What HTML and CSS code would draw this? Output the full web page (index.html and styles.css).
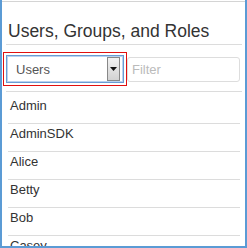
FILE: index.html
```html
<!DOCTYPE html>
<html>
<head>
<meta charset="utf-8">
<link rel="stylesheet" href="styles.css">
</head>
<body>
<div class="window">
  <div class="panel">
    <h1 class="title">Users, Groups, and Roles</h1>
    <div class="rule"></div>
    <div class="toolbar">
      <div class="select">
        <span class="select-text">Users</span>
        <span class="select-btn"><svg width="7" height="4" viewBox="0 0 7 4"><path d="M0 0h7L3.5 4z" fill="#111"/></svg></span>
      </div>
      <div class="filter">Filter</div>
      <div class="highlight"></div>
    </div>
    <div class="rule"></div>
    <ul class="list">
      <li class="item">Admin</li>
      <li class="item">AdminSDK</li>
      <li class="item">Alice</li>
      <li class="item">Betty</li>
      <li class="item">Bob</li>
      <li class="item">Casey</li>
    </ul>
  </div>
</div>
</body>
</html>
```

FILE: styles.css
```css
html, body {
  margin: 0;
  padding: 0;
  background: #fff;
}
.window {
  width: 247px;
  height: 248px;
  box-sizing: border-box;
  border-left: 2px solid #5b9bd5;
  border-right: 2px solid #5b9bd5;
  border-bottom: 2px solid #5b9bd5;
  overflow: hidden;
  font-family: "Liberation Sans", Arial, sans-serif;
}
.panel {
  margin-top: 1px;
  border-top: 1px solid #d4d4d4;
  padding: 0 3px 0 4px;
}
.title {
  margin: 19px 0 0 2px;
  font-size: 17.5px;
  line-height: 21px;
  font-weight: normal;
  color: #333;
}
.rule {
  height: 1px;
  background: #dcdcdc;
}
.title + .rule {
  margin-top: 2px;
}
.toolbar {
  position: relative;
  display: flex;
  align-items: center;
  gap: 3px;
  margin: 10px 0 8px 0;
}
.select {
  width: 118px;
  height: 28px;
  box-sizing: border-box;
  border: 1px solid #6a9bd4;
  box-shadow: inset 0 0 0 1px #b9d3ef;
  display: flex;
  align-items: center;
  justify-content: space-between;
  padding: 0 3px 0 9px;
  background: #fff;
}
.select-text {
  font-size: 13px;
  color: #555;
}
.select-btn {
  width: 13px;
  height: 24px;
  box-sizing: border-box;
  border: 1px solid #888;
  background: linear-gradient(#f2f2f2, #d2d2d2);
  display: flex;
  align-items: center;
  justify-content: center;
}
.filter {
  width: 113px;
  height: 25px;
  box-sizing: border-box;
  border: 1px solid #ddd;
  border-radius: 3px;
  padding-left: 4px;
  font-size: 13px;
  line-height: 23px;
  color: #bbb;
}
.highlight {
  position: absolute;
  left: -3px;
  top: -3px;
  width: 124px;
  height: 34px;
  box-sizing: border-box;
  border: 1px solid #e01010;
  pointer-events: none;
}
.list {
  list-style: none;
  margin: 0 2px 0 2px;
  padding: 4px 0 0 0;
}
.item {
  font-size: 13px;
  line-height: 16px;
  color: #333;
  padding: 2px 0 9px 2px;
  border-bottom: 1px solid #dcdcdc;
}
```
